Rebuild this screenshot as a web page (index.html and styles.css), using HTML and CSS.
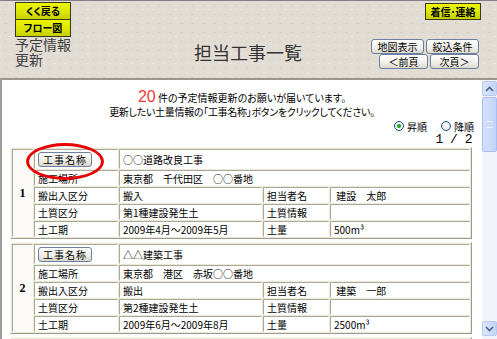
FILE: index.html
```html
<!DOCTYPE html>
<html lang="ja">
<head>
    <meta charset="UTF-8">
    <meta name="viewport" content="width=device-width, initial-scale=1.0">
    <title>担当工事一覧</title>
    <link rel="stylesheet" href="styles.css">
</head>
<body>
    <div class="header">
        <div class="head-left">
            <button class="btn-yellow">くく戻る</button>
            <button class="btn-yellow">フロー図</button>
            <div class="page-name">
                <div>予定情報</div>
                <div>更新</div>
            </div>
        </div>
        <h1 class="title">担当工事一覧</h1>
        <div class="head-right">
            <button class="btn-yellow btn-contact">着信･連絡</button>
            <div class="btn-row">
                <button class="btn">地図表示</button>
                <button class="btn">絞込条件</button>
            </div>
            <div class="btn-row">
                <button class="btn btn-page">＜前頁</button>
                <button class="btn btn-page">次頁＞</button>
            </div>
        </div>
    </div>

    <div class="frame">
        <div class="content">
            <p class="notice">
                <span class="count">20</span> 件の予定情報更新のお願いが届いています。<br>
                <span class="notice-sub">更新したい土量情報の「工事名称」ボタンをクリックしてください。</span>
            </p>

            <div class="list-head">
                <div class="sort">
                    <span class="radio checked"></span>昇順
                    <span class="radio gap"></span>降順
                </div>
                <div class="pager">1 / 2</div>
            </div>

            <div class="entry">
                <table class="work">
                    <colgroup>
                        <col class="c-no"><col class="c-label"><col class="c-value"><col class="c-label2"><col class="c-value2">
                    </colgroup>
                    <tr class="row-name">
                        <td class="no" rowspan="5">1</td>
                        <td><button class="btn-name">工事名称</button></td>
                        <td colspan="3">○○道路改良工事</td>
                    </tr>
                    <tr><td>施工場所</td><td colspan="3">東京都　千代田区　○○番地</td></tr>
                    <tr><td>搬出入区分</td><td>搬入</td><td>担当者名</td><td>&nbsp;建設　太郎</td></tr>
                    <tr><td>土質区分</td><td>第1種建設発生土</td><td>土質情報</td><td></td></tr>
                    <tr><td>土工期</td><td>2009年4月～2009年5月</td><td>土量</td><td>500m³</td></tr>
                </table>
                <span class="mark"></span>
            </div>

            <div class="entry">
                <table class="work">
                    <colgroup>
                        <col class="c-no"><col class="c-label"><col class="c-value"><col class="c-label2"><col class="c-value2">
                    </colgroup>
                    <tr class="row-name">
                        <td class="no" rowspan="5">2</td>
                        <td><button class="btn-name">工事名称</button></td>
                        <td colspan="3">△△建築工事</td>
                    </tr>
                    <tr><td>施工場所</td><td colspan="3">東京都　港区　赤坂○○番地</td></tr>
                    <tr><td>搬出入区分</td><td>搬出</td><td>担当者名</td><td>&nbsp;建築　一郎</td></tr>
                    <tr><td>土質区分</td><td>第2種建設発生土</td><td>土質情報</td><td></td></tr>
                    <tr><td>土工期</td><td>2009年6月～2009年8月</td><td>土量</td><td>2500m³</td></tr>
                </table>
            </div>

            <div class="entry">
                <table class="work">
                    <colgroup>
                        <col class="c-no"><col class="c-label"><col class="c-value"><col class="c-label2"><col class="c-value2">
                    </colgroup>
                    <tr class="row-name">
                        <td class="no"></td>
                        <td></td>
                        <td colspan="3"></td>
                    </tr>
                </table>
            </div>
        </div>

        <div class="scrollbar">
            <div class="sb-btn">
                <svg width="9" height="6" viewBox="0 0 9 6"><path d="M1 5 L4.5 1.5 L8 5" fill="none" stroke="#4d6185" stroke-width="1.6"/></svg>
            </div>
            <div class="sb-thumb"><span class="grip"></span></div>
            <div class="sb-track"></div>
            <div class="sb-btn">
                <svg width="9" height="6" viewBox="0 0 9 6"><path d="M1 1 L4.5 4.5 L8 1" fill="none" stroke="#4d6185" stroke-width="1.6"/></svg>
            </div>
        </div>
    </div>
</body>
</html>
```

FILE: styles.css
```css
* {
    box-sizing: border-box;
}

body {
    margin: 0;
    width: 497px;
    height: 339px;
    overflow: hidden;
    font-family: "Noto Sans CJK JP", sans-serif;
    color: #000;
    background-color: #fff;
}

/* header bar */
.header {
    height: 78px;
    border-top: 1px solid #808080;
    padding: 0 16px 0 15px;
    display: grid;
    grid-template-columns: 1fr auto 1fr;
    align-items: start;
    background-color: #e2ddd4;
    background-image:
        radial-gradient(#d2ccc1 0.8px, transparent 1.2px),
        radial-gradient(#ece8e1 0.8px, transparent 1.2px);
    background-size: 11px 9px;
    background-position: 0 0, 5px 4px;
}

.head-left {
    display: flex;
    flex-direction: column;
    align-items: flex-start;
    padding-top: 1px;
}

.btn-yellow {
    width: 56px;
    height: 18px;
    padding: 0;
    border: 1px solid #3a3a1a;
    background: linear-gradient(#eef500, #d8e400 60%, #c6d000);
    font-family: "Noto Sans CJK JP", sans-serif;
    font-size: 10px;
    font-weight: 700;
    line-height: 16px;
    color: #000;
    font-feature-settings: "palt";
}

.btn-yellow + .btn-yellow {
    margin-top: -1px;
}

.page-name {
    font-size: 14px;
    line-height: 15px;
    color: #3e3e3e;
}

.page-name div {
    height: 15px;
}

.title {
    margin: 40px 0 0;
    font-size: 18px;
    font-weight: 400;
    line-height: 22px;
    color: #333;
}

.head-right {
    display: flex;
    flex-direction: column;
    align-items: flex-end;
}

.btn-contact {
    margin-top: 2px;
    height: 17px;
}

.btn-row {
    display: flex;
    gap: 2px;
    margin-right: 2px;
}

.head-right .btn-contact + .btn-row {
    margin-top: 19px;
}

.btn {
    width: 53px;
    height: 15px;
    padding: 0;
    border: 1px solid #6d7f9e;
    border-radius: 3px;
    background: linear-gradient(#ffffff, #f1efe8 60%, #dcd8ce);
    font-family: "Noto Sans CJK JP", sans-serif;
    font-size: 10px;
    line-height: 13px;
    color: #000;
}

.btn-page {
    width: 49px;
}

/* content frame */
.frame {
    display: flex;
    height: 261px;
    border-top: 2px solid #9a978f;
    border-left: 2px solid #a09d95;
}

.content {
    flex: 1;
    overflow: hidden;
}

.notice {
    margin: 9px 0 0;
    text-align: center;
    font-size: 10px;
    line-height: 13px;
    font-feature-settings: "palt";
}

.notice-sub {
    letter-spacing: -0.3px;
}

.count {
    font-family: "Liberation Sans", sans-serif;
    font-size: 16px;
    line-height: 16px;
    color: #ee3a3a;
}

.list-head {
    padding-right: 8px;
    text-align: right;
    margin-top: 1px;
}

.sort {
    height: 14px;
    font-size: 10px;
    line-height: 13px;
    display: flex;
    justify-content: flex-end;
    align-items: center;
}

.radio {
    display: inline-block;
    width: 10px;
    height: 10px;
    border: 1px solid #1c5180;
    border-radius: 50%;
    background: radial-gradient(#fff, #dcdcd6);
    margin-right: 3px;
}

.radio.checked {
    background: radial-gradient(#2fa62f 1.8px, #fff 2.4px, #dcdcd6);
}

.radio.gap {
    margin-left: 14px;
}

.pager {
    height: 14px;
    font-family: "Liberation Mono", monospace;
    font-size: 13px;
    line-height: 14px;
    letter-spacing: -0.5px;
    padding-right: 2px;
}

/* work list */
.entry {
    position: relative;
    margin: 0 0 3px 8px;
    width: 462px;
}

.work {
    width: 462px;
    table-layout: fixed;
    border-collapse: separate;
    border-spacing: 1px;
    background-color: #ece9d8;
    border: 1px solid;
    border-color: #f8f7f2 #9c998e #9c998e #f8f7f2;
    font-size: 10px;
    font-feature-settings: "palt";
}

.c-no { width: 21px; }
.c-label { width: 84px; }
.c-value { width: 143px; }
.c-label2 { width: 66px; }
.c-value2 { width: 140px; }

.work td {
    height: 16px;
    padding: 0 3px;
    border: 1px solid;
    border-color: #aca899 #fdfdfb #fdfdfb #aca899;
    background-color: #fff;
    line-height: 13px;
    white-space: nowrap;
    overflow: hidden;
}

.work .row-name td {
    height: 20px;
}

.work td.no {
    text-align: center;
    font-family: "Liberation Serif", serif;
    font-size: 12px;
    font-weight: 700;
    padding: 0;
    background-color: #fbfaf6;
}

.btn-name {
    display: block;
    width: 54px;
    height: 15px;
    padding: 0;
    border: 1px solid #6d7f9e;
    border-radius: 3px;
    background: linear-gradient(#ffffff, #eeece4 60%, #d8d4ca);
    font-family: "Noto Sans CJK JP", sans-serif;
    font-size: 10px;
    line-height: 13px;
    letter-spacing: 1px;
    color: #000;
}

.mark {
    position: absolute;
    left: 16px;
    top: -4px;
    width: 78px;
    height: 37px;
    border: 3px solid #e80000;
    border-radius: 50%;
}

/* fake scroll bar */
.scrollbar {
    width: 15px;
    display: flex;
    flex-direction: column;
    background-color: #f1f4fc;
    padding-bottom: 2px;
}

.sb-btn {
    height: 15px;
    margin: 1px 0;
    border: 1px solid #b7c9f2;
    border-radius: 2px;
    background: linear-gradient(90deg, #dbe5fb, #c3d4f8);
    display: flex;
    align-items: center;
    justify-content: center;
}

.sb-thumb {
    height: 55px;
    border: 1px solid #a9bef0;
    border-radius: 2px;
    background: linear-gradient(90deg, #d4e0fc, #c3d3fa);
    display: flex;
    align-items: center;
    justify-content: center;
}

.grip {
    width: 6px;
    height: 7px;
    border-top: 1px solid #eef3ff;
    border-bottom: 1px solid #eef3ff;
}

.sb-track {
    flex: 1;
}
```
